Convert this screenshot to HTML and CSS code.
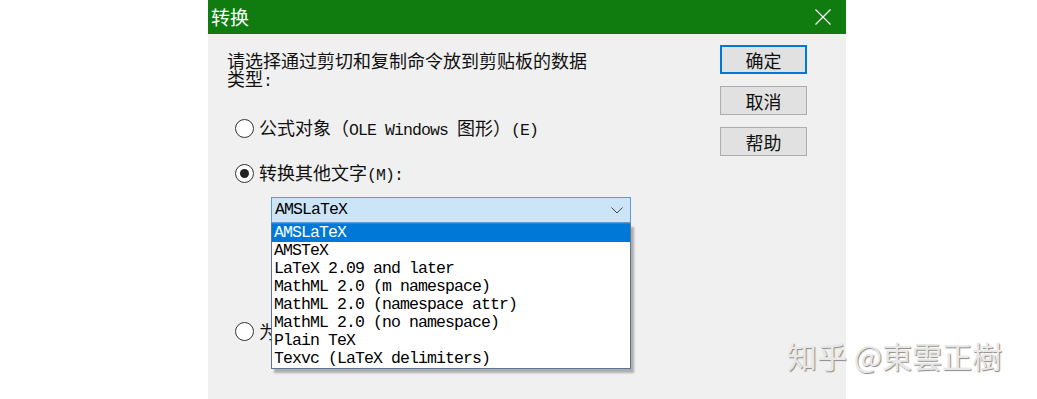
FILE: index.html
```html
<!DOCTYPE html>
<html lang="zh-CN">
<head>
    <meta charset="UTF-8">
    <meta name="viewport" content="width=device-width, initial-scale=1.0">
    <title>转换</title>
    <link rel="stylesheet" href="styles.css">
</head>
<body>
    <div class="screen">
        <div class="dialog">
            <div class="titlebar">
                <span class="title">转换</span>
                <svg class="close" width="16" height="16" viewBox="0 0 16 16">
                    <path d="M0.5 0.5 L15.5 15.5 M15.5 0.5 L0.5 15.5" stroke="#fff" stroke-width="1.2" fill="none"/>
                </svg>
            </div>
            <div class="content">
                <div class="main">
                    <p class="prompt">请选择通过剪切和复制命令放到剪贴板的数据<br>类型<span class="en">:</span></p>

                    <div class="radio-row first">
                        <span class="radio"></span>
                        <span class="label">公式对象（<span class="en">OLE Windows </span>图形）<span class="en">(E)</span></span>
                    </div>

                    <div class="radio-row second">
                        <span class="radio checked"></span>
                        <span class="label">转换其他文字<span class="en">(M):</span></span>
                    </div>

                    <div class="combo">
                        <span class="en">AMSLaTeX</span>
                        <svg class="chevron" width="12" height="7" viewBox="0 0 12 7">
                            <path d="M0.5 0.5 L6 6 L11.5 0.5" stroke="#444" stroke-width="1" fill="none"/>
                        </svg>
                        <ul class="list">
                            <li class="selected">AMSLaTeX</li>
                            <li>AMSTeX</li>
                            <li>LaTeX 2.09 and later</li>
                            <li>MathML 2.0 (m namespace)</li>
                            <li>MathML 2.0 (namespace attr)</li>
                            <li>MathML 2.0 (no namespace)</li>
                            <li>Plain TeX</li>
                            <li>Texvc (LaTeX delimiters)</li>
                        </ul>
                    </div>

                    <div class="radio-row third">
                        <span class="radio"></span>
                        <span class="label">为公式保留翻译器名称</span>
                    </div>
                </div>
                <div class="buttons">
                    <button class="btn default">确定</button>
                    <button class="btn">取消</button>
                    <button class="btn">帮助</button>
                </div>
            </div>
        </div>
        <div class="watermark">知乎 @東雲正樹</div>
    </div>
</body>
</html>
```

FILE: styles.css
```css
body {
    margin: 0;
    background-color: #fff;
    font-family: "Noto Sans CJK SC", sans-serif;
    overflow: hidden;
}

.screen {
    position: relative;
    height: 399px;
    display: flex;
}

.dialog {
    margin-left: 208px;
    width: 638px;
    height: 399px;
    background-color: #f0f0f0;
    display: flex;
    flex-direction: column;
}

.titlebar {
    height: 34px;
    background-color: #107c10; /* window accent green */
    display: flex;
    align-items: center;
    justify-content: space-between;
    padding: 0 15px 0 3px;
    flex-shrink: 0;
}

.title {
    color: #fff;
    font-size: 19px;
    line-height: 34px;
}

.content {
    display: flex;
}

.main {
    width: 493px;
    padding: 17px 0 0 19px;
    font-size: 18px;
    color: #111;
}

/* half-width latin, like SimSun (9px per char) */
.en {
    font-family: "Liberation Mono", monospace;
    font-size: 16.5px;
    letter-spacing: -0.9px;
    line-height: 1;
}

.prompt {
    margin: 0;
    height: 36px;
    line-height: 18px;
}

.radio-row {
    display: flex;
    align-items: center;
    gap: 5px;
    height: 20px;
    margin-left: 8px;
}

.radio-row.first {
    margin-top: 31px;
}

.radio-row.second {
    margin-top: 25px;
}

.radio-row.third {
    margin-top: 98px;
}

.label {
    line-height: 20px;
    white-space: nowrap;
}

.radio {
    width: 19px;
    height: 19px;
    box-sizing: border-box;
    border: 1px solid #333;
    border-radius: 50%;
    background-color: #fff;
    display: flex;
    align-items: center;
    justify-content: center;
    flex-shrink: 0;
}

.radio.checked::after {
    content: "";
    width: 9px;
    height: 9px;
    border-radius: 50%;
    background-color: #222;
}

.combo {
    position: relative;
    margin: 14px 0 0 44px;
    width: 360px;
    height: 26px;
    box-sizing: border-box;
    border: 1px solid #5b9bd8;
    background-color: #cce4f7;
    display: flex;
    align-items: center;
    justify-content: space-between;
    padding: 0 7px 0 3px;
    color: #000;
}

.list {
    position: absolute;
    top: 25px;
    left: -1px;
    width: 360px;
    box-sizing: border-box;
    margin: 0;
    padding: 0;
    list-style: none;
    background-color: #fff;
    border: 1px solid #5c7796;
    box-shadow: 3px 4px 2px rgba(0, 0, 0, 0.28);
    z-index: 1;
}

.list li {
    font-family: "Liberation Mono", monospace;
    font-size: 16.5px;
    letter-spacing: -0.9px;
    line-height: 18px;
    height: 18px;
    padding-left: 2px;
    color: #000;
    white-space: nowrap;
}

.list li.selected {
    background-color: #0078d7;
    color: #fff;
}

.buttons {
    display: flex;
    flex-direction: column;
    gap: 12px;
    padding-top: 11px;
}

.btn {
    width: 87px;
    height: 29px;
    box-sizing: border-box;
    border: 1px solid #adadad;
    background-color: #e1e1e1;
    font-family: "Noto Sans CJK SC", sans-serif;
    font-size: 18px;
    line-height: 1;
    color: #111;
    padding: 0;
}

.btn.default {
    border: 2px solid #0078d7;
}

.watermark {
    position: absolute;
    left: 787px;
    top: 340px;
    font-size: 30px;
    line-height: 30px;
    color: #e8e8e8;
    text-shadow: 1px 1px 1px #8a8a8a;
    white-space: nowrap;
}
```
